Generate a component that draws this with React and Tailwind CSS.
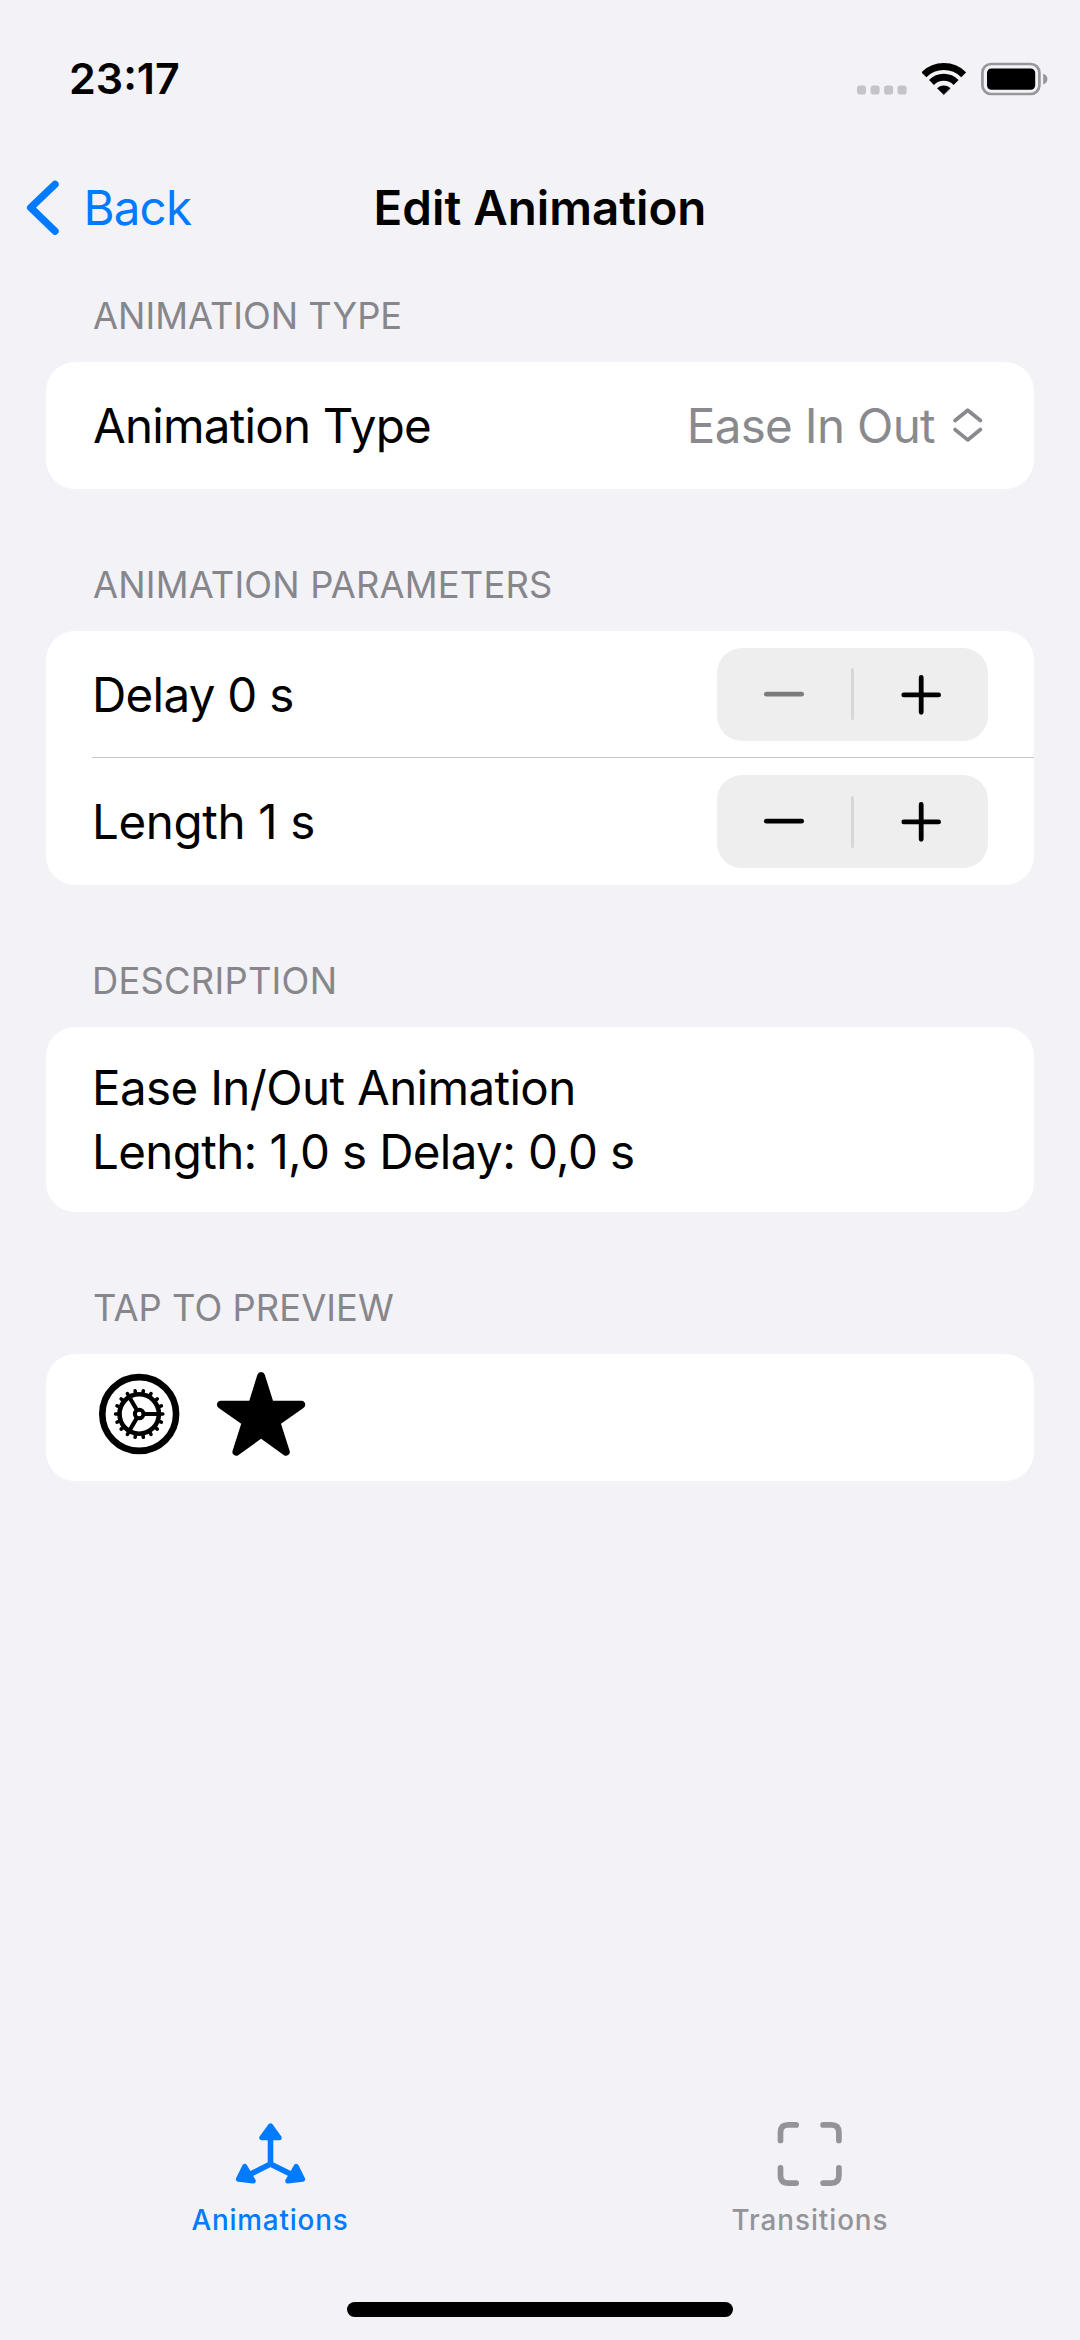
import React from "react";

function StatusBar() {
  return (
    <div className="flex h-[142px] items-center justify-between pt-[15px] pl-[69px] pr-8">
      <span className="text-[43px] leading-none font-semibold">23:17</span>
      <div className="flex items-center gap-[15px]">
        <svg className="h-[34px] w-[50px]" viewBox="0 0 50 34" fill="#c4c3c8">
          <rect x="0" y="23.5" width="9" height="9" rx="2.8" />
          <rect x="13.6" y="23.5" width="9" height="9" rx="2.8" />
          <rect x="27.1" y="23.5" width="9" height="9" rx="2.8" />
          <rect x="40.6" y="23.5" width="9" height="9" rx="2.8" />
        </svg>
        <svg className="h-[34px] w-[44px]" viewBox="0 0 44 34" fill="none" stroke="#000" strokeWidth="7">
          <path d="M1.9 12.8A28.3 28.3 0 0 1 41.7 12.8" />
          <path d="M9.5 20.4A17.5 17.5 0 0 1 34.1 20.4" />
          <path d="M21.8 32.6L15.4 26.3A9.6 9.6 0 0 1 28.2 26.3Z" fill="#000" stroke="#000" strokeWidth="0.6" strokeLinejoin="round" />
        </svg>
        <svg className="h-[34px] w-[67px]" viewBox="0 0 67 34">
          <rect x="1.4" y="2" width="57" height="30" rx="8.8" fill="none" stroke="#97969a" strokeWidth="2.7" />
          <rect x="6" y="6.5" width="48.2" height="21.3" rx="4.5" />
          <path d="M62.2 11.8C65 12.6 66.4 14.6 66.4 17.1C66.4 19.6 65 21.6 62.2 22.4Z" fill="#97969a" />
        </svg>
      </div>
    </div>
  );
}

function NavBar() {
  return (
    <div className="grid h-[129px] grid-cols-[1fr_auto_1fr] items-center pt-[2px] text-[47.5px] leading-none">
      <div className="flex items-center pl-6 text-[#007aff]">
        <svg className="h-[60px] w-10" viewBox="0 0 40 60" fill="none" stroke="currentColor" strokeWidth="7.4" strokeLinecap="round" strokeLinejoin="round">
          <path d="M31 6.4L6.7 29.7L31 53.2" />
        </svg>
        <span className="ml-[19.5px] tracking-[-0.83px]">Back</span>
      </div>
      <h1 className="font-semibold">Edit Animation</h1>
    </div>
  );
}

function Section({ title, spacing, children }) {
  return (
    <section>
      <h2 className={"flex h-[91px] items-center text-[36.3px] leading-none text-[#86868b] " + spacing}>{title}</h2>
      <div className="overflow-hidden rounded-[29px] bg-white">{children}</div>
    </section>
  );
}

function Stepper({ minusClass }) {
  return (
    <div className="flex h-[93px] w-[271px] items-center rounded-[25px] bg-[#eeeeee]">
      <svg className={"h-[93px] w-[134px] " + minusClass} viewBox="0 0 134 93" stroke="currentColor" strokeWidth="4.8" strokeLinecap="round">
        <path d="M49.4 46.2H84.6" />
      </svg>
      <span className="h-[52px] w-[3px] rounded-full bg-[#d7d7d9]" />
      <svg className="h-[93px] w-[134px] text-black" viewBox="0 0 134 93" stroke="currentColor" strokeWidth="4.8" strokeLinecap="round">
        <path d="M49.8 46.9H84.6M67.2 29.5V64.3" />
      </svg>
    </div>
  );
}

function Gear() {
  const teeth = Array.from({ length: 18 }, (_, i) => i * 20);
  return (
    <svg className="h-[127px] w-[118px]" viewBox="0 0 118 127" fill="none" stroke="#000">
      <g transform="translate(47.2 60)">
        <circle r="36.9" strokeWidth="6.6" />
        <circle r="19.7" strokeWidth="4.6" />
        {teeth.map((a) => (
          <path key={a} d="M20 0H23.6" strokeWidth="3.6" strokeLinecap="round" transform={`rotate(${a})`} />
        ))}
        <circle r="4.3" strokeWidth="4" />
        <path d="M5.5 0H19M-2.8 -4.8L-9.8 -16.8M-2.8 4.8L-9.8 16.8" strokeWidth="4.2" />
      </g>
    </svg>
  );
}

function Star() {
  return (
    <svg className="h-[127px] w-[104px]" viewBox="0 0 104 127">
      <path d="M39.3 46.7L47.4 20.7A3.9 3.9 0 0 1 54.8 20.7L63 46.7H91.2A3.9 3.9 0 0 1 93.4 53.9L71 69.7L79.6 96.8A3.8 3.8 0 0 1 73.7 101L51.1 84.7L28.5 101A3.8 3.8 0 0 1 22.6 96.8L31.2 69.7L8.8 53.9A3.9 3.9 0 0 1 11 46.7Z" />
    </svg>
  );
}

function TabBar() {
  return (
    <nav className="mt-auto grid h-[240px] grid-cols-2 content-start pt-[18px] text-[27.8px] leading-[34px] font-medium">
      <div className="flex flex-col items-center text-[#007aff]">
        <svg className="h-[70px] w-20" viewBox="0 0 80 70" fill="currentColor" stroke="currentColor" strokeWidth="5" strokeLinejoin="round">
          <path d="M40.5 20V46M40.5 46L20 56.3M40.5 46L61 56.3" fill="none" strokeWidth="5.6" />
          <path d="M40.5 7.8L31.8 19.7H49.2Z" />
          <path d="M14.7 48.3L8.4 61.2L23.3 63Z" />
          <path d="M66.3 48.3L72.6 61.2L57.7 63Z" />
        </svg>
        <span className="mt-[15px] tracking-[0.83px]">Animations</span>
      </div>
      <div className="flex flex-col items-center text-[#949498]">
        <svg className="h-[70px] w-20" viewBox="0 0 80 70" fill="none" stroke="currentColor" strokeWidth="5.7" strokeLinecap="round">
          <path d="M10.5 22.5V14.5Q10.5 6.9 18.1 6.9H26.2M53.1 6.9H61.3Q68.9 6.9 68.9 14.5V22.5M68.9 49.8V57.5Q68.9 65.1 61.3 65.1H53.1M26.2 65.1H18.1Q10.5 65.1 10.5 57.5V49.8" />
        </svg>
        <span className="mt-[15px] tracking-[0.93px]">Transitions</span>
      </div>
      <div className="col-span-2 mx-auto mt-[65px] h-[15px] w-[386px] rounded-full bg-black" />
    </nav>
  );
}

export default function App() {
  return (
    <div className="flex h-[2340px] w-[1080px] flex-col bg-[#f2f2f7] font-['Inter',sans-serif] text-black">
      <StatusBar />
      <NavBar />
      <main className="flex flex-col gap-[51px] px-[46px] text-[47.5px]">
        <Section title="ANIMATION TYPE" spacing="pl-[47px] tracking-normal">
          <div className="flex h-[127px] items-center pr-[46px] pl-[47px] leading-none">
            <span className="pt-px tracking-[-0.77px]">Animation Type</span>
            <span className="ml-auto tracking-[-0.66px] text-[#8a8a8e]">Ease In Out</span>
            <svg className="ml-[15px] h-[41px] w-[38px]" viewBox="0 0 38 41" fill="none" stroke="#8a8a8e" strokeWidth="3.8" strokeLinecap="round" strokeLinejoin="round">
              <path d="M5.1 15.5L17.7 5.2L30.4 15.5M5.1 24.6L17.7 34.9L30.4 24.6" />
            </svg>
          </div>
        </Section>
        <Section title="ANIMATION PARAMETERS" spacing="pl-[47px] tracking-[0.18px]">
          <div className="ml-[46px] flex h-[127px] items-center border-b border-[#c6c6c8] pr-[46px] leading-none">
            <span className="pt-[2px] tracking-[-0.69px]">Delay 0 s</span>
            <div className="ml-auto"><Stepper minusClass="text-[#7b7b7b]" /></div>
          </div>
          <div className="ml-[46px] flex h-[127px] items-center pr-[46px] leading-none">
            <span className="pt-px tracking-[-0.35px]">Length 1 s</span>
            <div className="ml-auto"><Stepper minusClass="text-black" /></div>
          </div>
        </Section>
        <Section title="DESCRIPTION" spacing="pl-[46px] tracking-[0.26px]">
          <p className="px-[46px] py-[29px] leading-[63.5px] tracking-[-0.63px]">
            Ease In/Out Animation<br />Length: 1,0 s Delay: 0,0 s
          </p>
        </Section>
        <Section title="TAP TO PREVIEW" spacing="pl-[47px] tracking-[0.07px]">
          <div className="flex h-[127px] pl-[46px]">
            <Gear />
            <Star />
          </div>
        </Section>
      </main>
      <TabBar />
    </div>
  );
}
